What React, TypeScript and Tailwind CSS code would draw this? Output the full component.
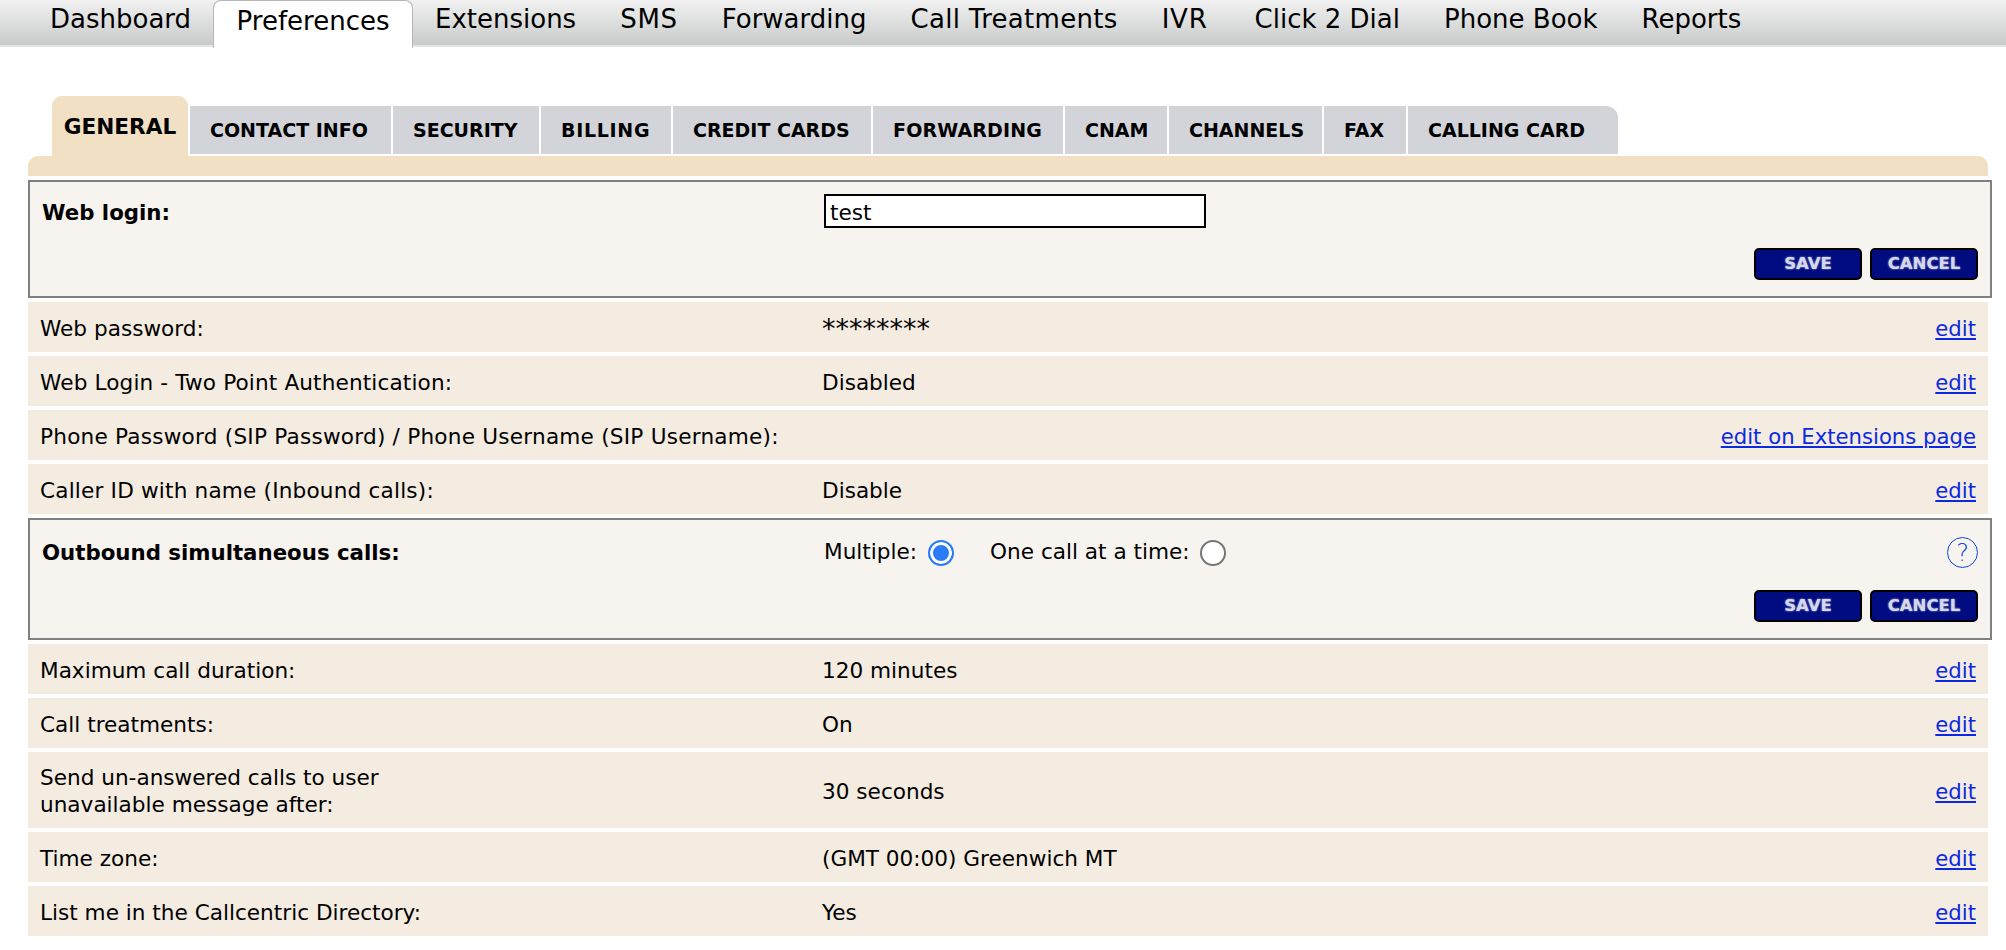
const navItems = [
  { label: 'Dashboard', extra: '' },
  { label: 'Preferences', extra: '' },
  { label: 'Extensions', extra: '' },
  { label: 'SMS', extra: 'tracking-[0.7px]' },
  { label: 'Forwarding', extra: '' },
  { label: 'Call Treatments', extra: 'tracking-[0.3px]' },
  { label: 'IVR', extra: 'tracking-[0.8px] mr-[3px]' },
  { label: 'Click 2 Dial', extra: '' },
  { label: 'Phone Book', extra: '' },
  { label: 'Reports', extra: '' },
];
const subTabs = [
  { label: 'CONTACT INFO', cls: 'w-[201px]' },
  { label: 'SECURITY', cls: 'w-[146px]' },
  { label: 'BILLING', cls: 'w-[130px] tracking-[0.7px]' },
  { label: 'CREDIT CARDS', cls: 'w-[198px]' },
  { label: 'FORWARDING', cls: 'w-[190px] tracking-[0.15px]' },
  { label: 'CNAM', cls: 'w-[102px]' },
  { label: 'CHANNELS', cls: 'w-[153px]' },
  { label: 'FAX', cls: 'w-[82px]' },
  { label: 'CALLING CARD', cls: 'w-[210px] rounded-tr-[12px]' },
];

function Row({ label, value, link = 'edit', tall = false, labelClass = '' }: { label: React.ReactNode; value?: React.ReactNode; link?: string; tall?: boolean; labelClass?: string }) {
  return (
    <div className={`grid grid-cols-[782px_1fr_auto] items-center pt-[2px] px-[12px] bg-[#f4ece0] leading-[27px] ${tall ? 'h-[76px]' : 'h-[50px]'}`}>
      <div className={labelClass}>{label}</div>
      <div>{value}</div>
      <a href="#" className="text-[21.2px] text-[#0b2ae0] underline">{link}</a>
    </div>
  );
}

function Buttons() {
  return (
    <div className="flex justify-end gap-[8px]">
      <button className="w-[108px] h-[32px] pt-[1px] rounded-[5px] border-2 border-black bg-[#000c80] text-[#d5d8ea] text-[16.5px] font-bold [text-shadow:0_0_2px_#c5c9e2]">SAVE</button>
      <button className="w-[108px] h-[32px] pt-[1px] rounded-[5px] border-2 border-black bg-[#000c80] text-[#d5d8ea] text-[16.5px] font-bold [text-shadow:0_0_2px_#c5c9e2]">CANCEL</button>
    </div>
  );
}

export default function App() {
  return (
    <div className="h-[950px] overflow-hidden bg-white text-black text-[21.6px] font-['DejaVu_Sans',Verdana,sans-serif]">
      {/* top nav */}
      <div className="flex h-[47px] pl-[28px] bg-gradient-to-b from-[#f1f1f1] to-[#c9cbcb] border-b-2 border-[#e4e6e6]">
        {navItems.map(item => item.label === 'Preferences' ? (
          <div key={item.label} className="h-[48px] px-[22.5px] pt-[1px] leading-[38px] text-[26px] bg-white border border-b-0 border-[#b5b7b7] rounded-t-[8px]">{item.label}</div>
        ) : (
          <div key={item.label} className={`h-[46px] px-[22px] leading-[38px] text-[26px] ${item.extra}`}>{item.label}</div>
        ))}
      </div>

      <div className="ml-[28px] w-[1960px] mt-[49px]">
        {/* sub tabs */}
        <div className="flex items-end h-[60px] ml-[24px] text-[19px] font-bold">
          <div className="flex items-center h-[60px] w-[136px] justify-center pt-[2px] bg-[#f1e0c3] rounded-t-[10px] text-[21.6px]">GENERAL</div>
          <div className="flex gap-[2px] ml-[2px] mb-[2px]">
            {subTabs.map(tab => (
              <div key={tab.label} className={`flex items-center h-[48px] pl-[20px] bg-[#d2d4d9] ${tab.cls}`}>{tab.label}</div>
            ))}
          </div>
        </div>
        <div className="h-[20px] bg-[#f1e0c3] rounded-t-[10px]"></div>

        <div className="flex flex-col gap-[4px] mt-[4px]">
          {/* web login box */}
          <div className="w-[1964px] h-[118px] pt-[12px] pb-[16px] px-[12px] border-2 border-[#808080] bg-[#f7f4ef] flex flex-col justify-between">
            <div className="grid grid-cols-[782px_1fr] items-center">
              <b className="pt-[3px] text-[21.3px]">Web login:</b>
              <input readOnly defaultValue="test" className="w-[382px] h-[34px] px-[4px] pt-[2px] border-2 border-black bg-white outline-none" />
            </div>
            <Buttons />
          </div>

          <Row label="Web password:" value={<span className="inline-block pt-[3px] text-[27px] leading-none">********</span>} />
          <Row label="Web Login - Two Point Authentication:" value="Disabled" labelClass="tracking-[0.13px]" />
          <Row label="Phone Password (SIP Password) / Phone Username (SIP Username):" link="edit on Extensions page" labelClass="tracking-[0.22px]" />
          <Row label="Caller ID with name (Inbound calls):" value="Disable" labelClass="tracking-[0.18px]" />

          {/* outbound calls box */}
          <div className="w-[1964px] h-[122px] pt-[16px] pb-[16px] px-[12px] border-2 border-[#808080] bg-[#f7f4ef] flex flex-col justify-between">
            <div className="grid grid-cols-[782px_1fr_auto] items-center">
              <b className="text-[21.3px]">Outbound simultaneous calls:</b>
              <div className="flex items-center">
                <span className="pb-[1px]">Multiple:</span>
                <input type="radio" name="calls" defaultChecked className="appearance-none w-[26px] h-[26px] m-0 ml-[11px] rounded-full border-2 border-[#767676] bg-white checked:border-[#2a7cf6] checked:bg-[#2a7cf6] checked:shadow-[inset_0_0_0_3px_white]" />
                <span className="ml-[36px] pb-[1px]">One call at a time:</span>
                <input type="radio" name="calls" className="appearance-none w-[26px] h-[26px] m-0 ml-[10px] rounded-full border-2 border-[#767676] bg-white checked:border-[#2a7cf6] checked:bg-[#2a7cf6] checked:shadow-[inset_0_0_0_3px_white]" />
              </div>
              <span className="flex items-center justify-center w-[31px] h-[31px] rounded-full border-[1.5px] border-[#0f47dc] text-[#0f47dc] text-[24px] font-extralight">?</span>
            </div>
            <Buttons />
          </div>

          <Row label="Maximum call duration:" value="120 minutes" />
          <Row label="Call treatments:" value="On" />
          <Row tall label={<>Send un-answered calls to user<br />unavailable message after:</>} value="30 seconds" />
          <Row label="Time zone:" value="(GMT 00:00) Greenwich MT" />
          <Row label="List me in the Callcentric Directory:" value="Yes" />
        </div>
      </div>
    </div>
  );
}
